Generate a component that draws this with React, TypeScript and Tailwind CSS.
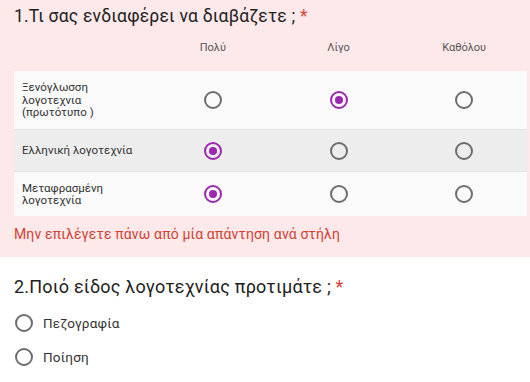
import React from 'react';

const cols = ['Πολύ', 'Λίγο', 'Καθόλου'];

const rows = [
  { label: ['Ξενόγλωσση', 'λογοτεχνια', '(πρωτότυπο )'], pick: 1, bg: 'bg-[#fafafa]', h: 'h-[58px]' },
  { label: ['Ελληνική λογοτεχνία'], pick: 0, bg: 'bg-[#ededed]', h: 'h-[42px]' },
  { label: ['Μεταφρασμένη', 'λογοτεχνία'], pick: 0, bg: 'bg-[#fafafa]', h: 'h-[45px]' },
];

const Radio = ({ on }: { on: boolean }) =>
  on ? (
    <span className="w-[18px] h-[18px] rounded-full border-2 border-[#9c27b0] flex items-center justify-center">
      <span className="w-[8px] h-[8px] rounded-full bg-[#9c27b0]" />
    </span>
  ) : (
    <span className="w-[18px] h-[18px] rounded-full border-2 border-[#6d6d6d]" />
  );

export default function App() {
  return (
    <div className="w-[530px] h-[382px] overflow-hidden bg-white text-[#212121]" style={{ fontFamily: 'Roboto, "Noto Sans", sans-serif' }}>
      <div className="bg-[#fde8ea] pt-[4px] pb-[14px]">
        <div className="px-[14px] text-[17.5px] leading-[24px] tracking-[0.2px]">
          1.Τι σας ενδιαφέρει να διαβάζετε ; <span className="text-[#db4437]">*</span>
        </div>

        <div className="ml-[14px] mr-[3px] mt-[13px]">
          <div className="flex h-[30px] items-start text-[11px] text-[#555]">
            <div className="w-[136px]" />
            {cols.map(c => (
              <div key={c} className="flex-1 text-center leading-[14px]">{c}</div>
            ))}
          </div>

          {rows.map((r, i) => (
            <div key={i} className={`flex items-center ${r.bg} ${r.h} ${i > 0 ? 'border-t border-[#e4e4e4]' : ''}`}>
              <div className="w-[136px] pl-[8px] text-[11.5px] leading-[12.5px] text-[#333]">
                {r.label.map(l => <div key={l}>{l}</div>)}
              </div>
              {cols.map((c, j) => (
                <div key={c} className="flex-1 flex justify-center">
                  <Radio on={r.pick === j} />
                </div>
              ))}
            </div>
          ))}
        </div>

        <div className="px-[14px] mt-[9px] text-[14px] leading-[18px] tracking-[0.15px] text-[#d23f31]">
          Μην επιλέγετε πάνω από μία απάντηση ανά στήλη
        </div>
      </div>

      <div className="px-[14px] pt-[18px]">
        <div className="text-[18px] leading-[24px] tracking-[0.2px]">
          2.Ποιό είδος λογοτεχνίας προτιμάτε ; <span className="text-[#db4437]">*</span>
        </div>
        <div className="mt-[15px] flex flex-col gap-[16px]">
          {['Πεζογραφία', 'Ποίηση'].map(o => (
            <div key={o} className="flex items-center gap-[10px] h-[18px] pl-[1px]">
              <Radio on={false} />
              <span className="text-[13.5px] tracking-[0.2px] text-[#333]">{o}</span>
            </div>
          ))}
        </div>
      </div>
    </div>
  );
}
